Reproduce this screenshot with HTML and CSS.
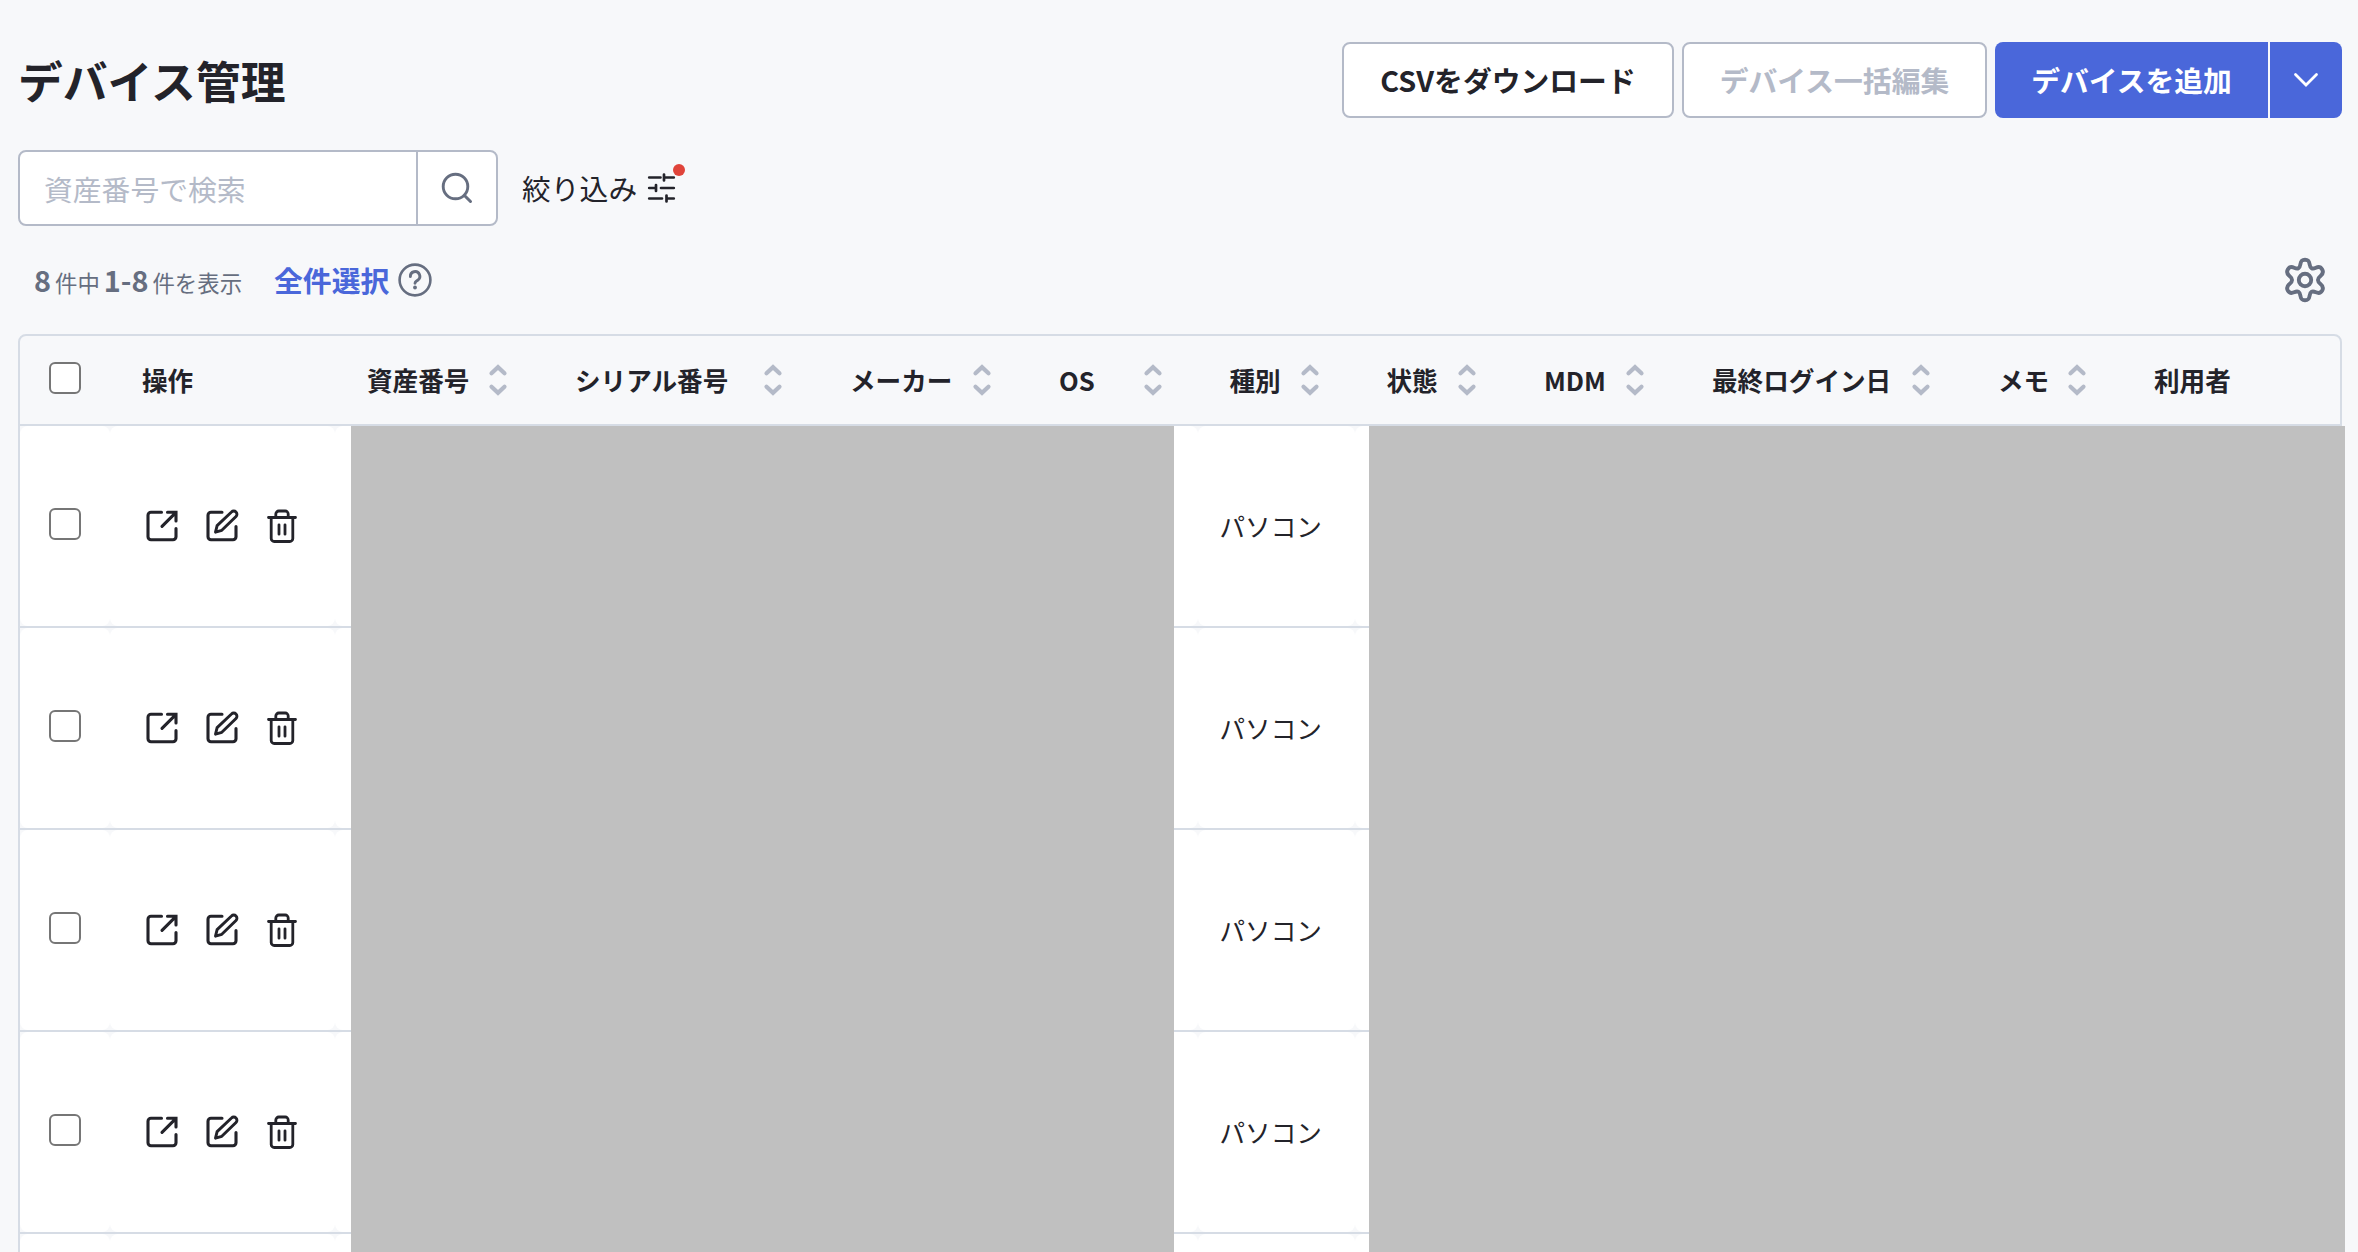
FILE: index.html
```html
<!DOCTYPE html>
<html lang="ja">
<head>
    <meta charset="UTF-8">
    <meta name="viewport" content="width=device-width, initial-scale=1.0">
    <title>デバイス管理</title>
    <link rel="stylesheet" href="styles.css">
</head>
<body>
    <!-- Shared icons -->
    <svg class="icon-defs" width="0" height="0">
        <symbol id="icon-sort" viewBox="0 0 26 32">
            <path d="M6.5 9.3L13 3.2l6.500 6.100M6.500 22.700l6.500 6.100 6.500-6.100" fill="none" stroke="currentColor" stroke-width="4.200" stroke-linecap="round"/>
        </symbol>
        <symbol id="icon-open" viewBox="0 0 36 36">
            <path d="M17.500 4.300H7a3 3 0 0 0-3 3v21.500a3 3 0 0 0 3 3h22a3 3 0 0 0 3-3V20.500M23.500 4.300H32V13M31.500 4.800L18 18.300" fill="none" stroke="currentColor" stroke-width="3.100" stroke-linecap="round"/>
        </symbol>
        <symbol id="icon-edit" viewBox="0 0 36 36">
            <path d="M18 4.300H7a3 3 0 0 0-3 3v21.500a3 3 0 0 0 3 3h22a3 3 0 0 0 3-3V18.500" fill="none" stroke="currentColor" stroke-width="3.100" stroke-linecap="round"/>
            <path d="M11.500 24.200l1.600-6.600L27.500 4a3.100 3.100 0 0 1 4.500 4.500L17.800 22.300z" fill="none" stroke="currentColor" stroke-width="2.900" stroke-linejoin="round"/>
        </symbol>
        <symbol id="icon-trash" viewBox="0 0 36 36">
            <path d="M4.500 9.500h27M7.200 10v20.500a3 3 0 0 0 3 3h15.600a3 3 0 0 0 3-3V10M11.800 9V6a3 3 0 0 1 3-3h6.400a3 3 0 0 1 3 3v3" fill="none" stroke="currentColor" stroke-width="2.800" stroke-linecap="round"/>
            <path d="M15 16.800v9.400M21 16.800v9.400" fill="none" stroke="currentColor" stroke-width="2.800" stroke-linecap="round"/>
        </symbol>
    </svg>

    <main class="page">
        <header class="page-header">
            <h1 class="page-title">デバイス管理</h1>
            <div class="header-actions">
                <button type="button" class="btn">CSVをダウンロード</button>
                <button type="button" class="btn btn-edit" disabled>デバイス一括編集</button>
                <div class="btn-split">
                    <button type="button" class="btn-primary btn-add">デバイスを追加</button>
                    <button type="button" class="btn-primary btn-toggle">
                        <svg width="28" height="28" viewBox="0 0 28 28"><path d="M3.500 8.500L14 19l10.500-10.500" fill="none" stroke="currentColor" stroke-width="2.800" stroke-linecap="round"/></svg>
                    </button>
                </div>
            </div>
        </header>

        <div class="search-row">
            <form class="search-box">
                <input type="text" class="search-input" placeholder="資産番号で検索">
                <button type="button" class="search-btn">
                    <svg width="34" height="34" viewBox="0 0 34 34"><circle cx="15.500" cy="15.500" r="12.300" fill="none" stroke="currentColor" stroke-width="2.900"/><path d="M24.500 24.500l6 6" stroke="currentColor" stroke-width="3" stroke-linecap="round"/></svg>
                </button>
            </form>
            <button type="button" class="filter-btn">
                絞り込み
                <span class="filter-icon">
                    <svg width="30" height="32" viewBox="0 0 30 32"><path d="M3.200 5.500h11.300M18 5.500h9.800M18 2.500v6M3.200 16h6M10 13v6M15 16h12.800M3.200 26.500h12.800M20.500 26.500h7.300M20.500 23.500v6" fill="none" stroke="currentColor" stroke-width="2.700" stroke-linecap="round"/></svg>
                    <span class="filter-dot"></span>
                </span>
            </button>
        </div>

        <div class="summary-row">
            <p class="count"><strong>8</strong> 件中 <strong>1-8</strong> 件を表示</p>
            <a class="select-all">全件選択</a>
            <svg class="help" width="36" height="36" viewBox="0 0 36 36"><circle cx="18" cy="18" r="15.400" fill="none" stroke="currentColor" stroke-width="2.600"/><path d="M13.400 14.600a4.700 4.700 0 1 1 7.300 3.600c-1.500 1-2.700 1.300-2.700 3" fill="none" stroke="currentColor" stroke-width="2.900" stroke-linecap="round"/><circle cx="18" cy="25.500" r="1.900" fill="currentColor"/></svg>
            <svg class="gear" width="44" height="48" viewBox="0 0 44 48"><path d="M17.400 8.200C18 4.200 19.500 3.700 22 3.700s4 .5 4.600 4.500c.7 4.300 2.500 5.200 6.300 3.500 3.500-1.500 5-.400 6.300 1.800 1.200 2.200 1.400 4-1.700 6.500-3.400 2.700-3.400 5.300 0 8 3.100 2.500 2.900 4.300 1.700 6.500-1.300 2.200-2.800 3.300-6.300 1.800-3.800-1.700-5.600-.800-6.300 3.500-.6 4-2.100 4.500-4.600 4.500s-4-.5-4.600-4.500c-.7-4.300-2.500-5.200-6.300-3.500-3.500 1.500-5 .400-6.300-1.800-1.200-2.200-1.400-4 1.700-6.500 3.400-2.700 3.400-5.300 0-8-3.100-2.500-2.900-4.300-1.700-6.500 1.300-2.200 2.800-3.300 6.300-1.800 3.800 1.700 5.600.800 6.300-3.500z" fill="none" stroke="currentColor" stroke-width="3.900" stroke-linejoin="round"/><circle cx="22" cy="24" r="6.200" fill="none" stroke="currentColor" stroke-width="3.900"/></svg>
        </div>

        <div class="table">
            <div class="table-row table-head">
                <div class="th"><span class="checkbox"></span></div>
                <div class="th">操作</div>
                <div class="th">資産番号<svg class="sort"><use href="#icon-sort"/></svg></div>
                <div class="th">シリアル番号<svg class="sort"><use href="#icon-sort"/></svg></div>
                <div class="th">メーカー<svg class="sort"><use href="#icon-sort"/></svg></div>
                <div class="th">OS<svg class="sort"><use href="#icon-sort"/></svg></div>
                <div class="th">種別<svg class="sort"><use href="#icon-sort"/></svg></div>
                <div class="th">状態<svg class="sort"><use href="#icon-sort"/></svg></div>
                <div class="th">MDM<svg class="sort"><use href="#icon-sort"/></svg></div>
                <div class="th">最終ログイン日<svg class="sort"><use href="#icon-sort"/></svg></div>
                <div class="th">メモ<svg class="sort"><use href="#icon-sort"/></svg></div>
                <div class="th">利用者</div>
            </div>
            <div class="table-body" id="tableBody">
                <div class="mask mask-left"></div>
                <div class="mask mask-right"></div>
            </div>
        </div>
    </main>

    <script>
        const tableBody = document.getElementById('tableBody');
        const types = ['パソコン', 'パソコン', 'パソコン', 'パソコン', ''];

        // Build one row per device
        types.forEach((type) => {
            const row = document.createElement('div');
            row.className = 'table-row';
            row.innerHTML = `
                <div class="td">${type ? '<span class="checkbox"></span>' : ''}</div>
                <div class="td actions">${type ? `
                    <svg><use href="#icon-open"/></svg>
                    <svg><use href="#icon-edit"/></svg>
                    <svg><use href="#icon-trash"/></svg>` : ''}
                </div>
                <div class="td"></div><div class="td"></div><div class="td"></div><div class="td"></div>
                <div class="td">${type}</div>
                <div class="td"></div><div class="td"></div><div class="td"></div><div class="td"></div><div class="td"></div>`;
            tableBody.appendChild(row);
        });
    </script>
</body>
</html>
```
FILE: styles.css
```css
* {
    margin: 0;
    padding: 0;
    box-sizing: border-box;
}

html {
    overflow: hidden;
}

body {
    font-family: 'Noto Sans CJK JP', sans-serif;
    font-size: 28.8px;
    line-height: 1.5;
    color: #23232a;
    background: #f7f8fa;
}

button,
input {
    font: inherit;
    color: inherit;
    border: none;
    background: none;
}

svg {
    display: block;
    flex-shrink: 0;
}

.icon-defs {
    display: none;
}

.page {
    height: 1252px;
    padding: 42px 16px 0 18px;
    overflow: hidden;
}

.page-header {
    display: flex;
    justify-content: space-between;
    align-items: center;
    height: 76px;
}

.page-title {
    font-size: 44.8px;
    font-weight: 700;
    line-height: 76px;
}

.header-actions {
    display: flex;
    gap: 8px;
}

.btn {
    width: 332px;
    height: 76px;
    border: 2px solid #b4bac8;
    border-radius: 8px;
    background: #fff;
    font-weight: 700;
    white-space: nowrap;
}

.btn-edit {
    width: 305px;
}

.btn:disabled {
    color: #b4bac8;
}

.btn-split {
    display: flex;
    gap: 2px;
}

.btn-primary {
    height: 76px;
    background: #4a67da;
    color: #fff;
    font-weight: 700;
    white-space: nowrap;
}

.btn-add {
    width: 273px;
    border-radius: 8px 0 0 8px;
}

.btn-toggle {
    display: flex;
    align-items: center;
    justify-content: center;
    width: 72px;
    border-radius: 0 8px 8px 0;
}

.search-row {
    display: flex;
    align-items: center;
    margin-top: 32px;
}

.search-box {
    display: flex;
    width: 480px;
    height: 76px;
    border: 2px solid #b4bac8;
    border-radius: 8px;
    background: #fff;
    overflow: hidden;
}

.search-input {
    flex: 1;
    min-width: 0;
    padding: 2px 0 0 24px;
}

.search-input::placeholder {
    color: #b4bac8;
}

.search-btn {
    display: flex;
    align-items: center;
    justify-content: center;
    width: 80px;
    border-left: 2px solid #b4bac8;
    color: #666e80;
}

.filter-btn {
    display: flex;
    align-items: center;
    gap: 9px;
    margin-left: 24px;
}

.filter-icon {
    position: relative;
}

.filter-dot {
    position: absolute;
    top: -8px;
    right: -9px;
    width: 12px;
    height: 12px;
    border-radius: 50%;
    background: #e0443a;
}

.summary-row {
    display: flex;
    align-items: center;
    height: 108px;
    padding: 0 15px 0 16px;
    color: #666e80;
}

.count {
    font-size: 22.4px;
    white-space: nowrap;
    word-spacing: -1px;
}

.count strong {
    font-size: 28.8px;
}

.select-all {
    margin-left: 32px;
    color: #4a67da;
    font-weight: 700;
}

.help {
    margin-left: 8px;
}

.gear {
    margin-left: auto;
}

.table {
    border: 2px solid #d6dce5;
    border-radius: 8px 8px 0 0;
}

.table-row {
    display: grid;
    grid-template-columns: 90px 225px 208px 275px 209px 170.5px 157px 157.5px 168px 286px 156px 1fr;
    height: 202px;
    border-bottom: 2px solid #d6dce5;
}

.table-head {
    height: 90px;
    font-size: 25.6px;
    font-weight: 700;
}

.th {
    display: flex;
    align-items: center;
    justify-content: space-between;
    padding: 0 32px;
    white-space: nowrap;
}

.sort {
    width: 26px;
    height: 32px;
    color: #b4bac8;
}

.td {
    display: flex;
    align-items: center;
    padding: 0 22px;
    border-radius: 8px;
    background: #fff;
    font-size: 25.6px;
}

.th:first-child,
.td:first-child {
    padding: 0 29px 4px;
}

.checkbox {
    width: 32px;
    height: 32px;
    border: 2px solid #767676;
    border-radius: 6px;
    background: #fff;
}

.actions {
    gap: 24px;
    padding: 0 34px;
}

.actions svg {
    width: 36px;
    height: 36px;
}

.table-body {
    position: relative;
}

/* Blocks that cover the private columns */
.mask {
    position: absolute;
    top: 0;
    bottom: 0;
    background: #c0c0c0;
}

.mask-left {
    left: 331px;
    width: 823px;
}

.mask-right {
    left: 1349px;
    width: 976px;
}
```
